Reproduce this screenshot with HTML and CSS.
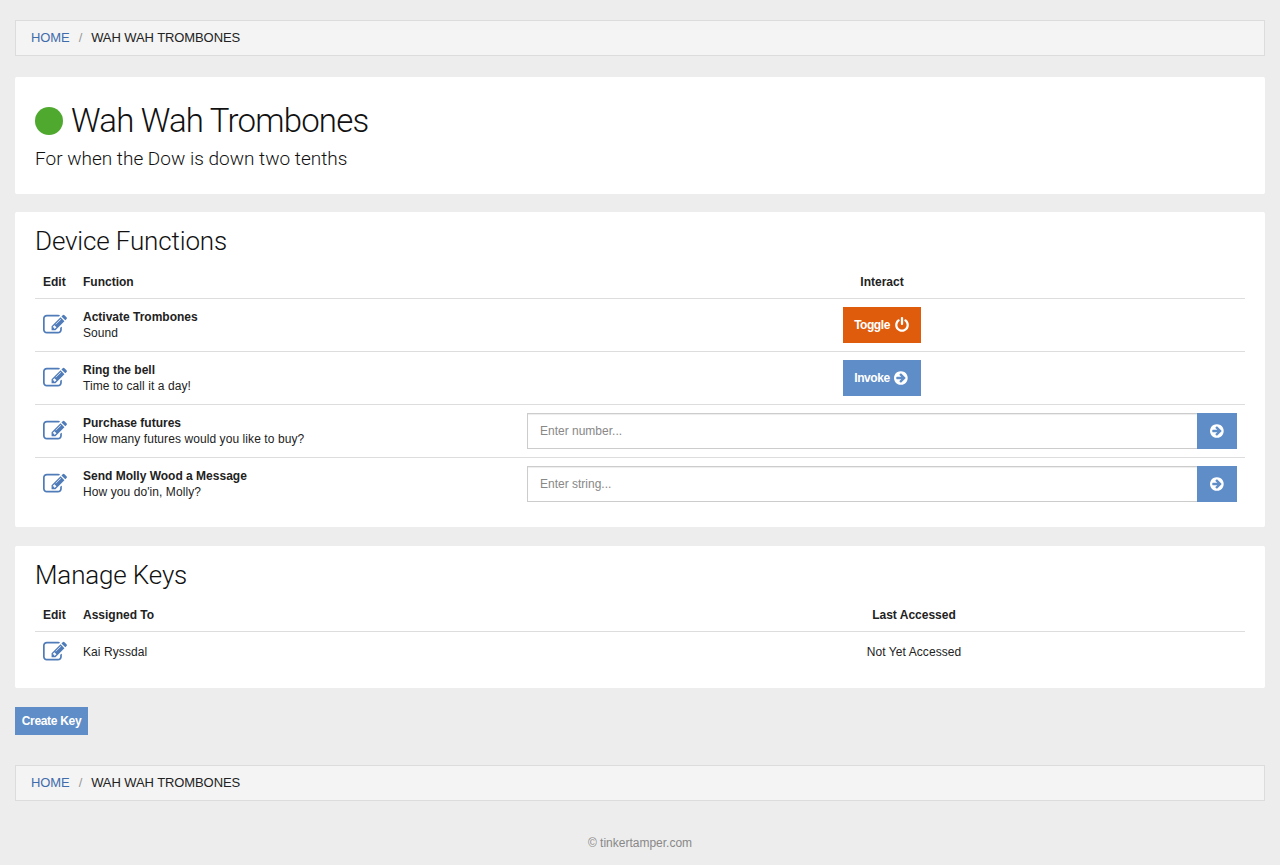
FILE: index.html
```html
<!DOCTYPE html>
<html lang="en">
<head>
  <meta charset="UTF-8" />
  <title>Wah Wah Trombones</title>
  <link rel="stylesheet" href="styles.css">
</head>
<body>
  <svg class="defs" width="0" height="0">
    <symbol id="icon-edit" viewBox="0 0 1792 1792">
      <path d="M888 1184l116-116-152-152-116 116v56h96v96h56zm440-720q-16-16-33 1l-350 350q-17 17-1 33t33-1l350-350q17-17 1-33zm80 594v190q0 119-84.500 203.500t-203.500 84.500h-832q-119 0-203.500-84.500t-84.500-203.500v-832q0-119 84.500-203.500t203.500-84.500h832q63 0 117 25 15 7 18 23 3 17-9 29l-49 49q-14 14-32 8-23-6-45-6h-832q-66 0-113 47t-47 113v832q0 66 47 113t113 47h832q66 0 113-47t47-113v-126q0-13 9-22l64-64q15-15 35-7t20 29zm-96-738l288 288-672 672h-288v-288zm444 132l-92 92-288-288 92-92q28-28 68-28t68 28l152 152q28 28 28 68t-28 68z" fill="currentColor"/>
    </symbol>
    <symbol id="icon-arrow" viewBox="0 0 1792 1792">
      <path d="M1285 896q0-27-18-45l-91-91-362-362q-18-18-45-18t-45 18l-91 91q-18 18-18 45t18 45l189 189h-502q-26 0-45 19t-19 45v128q0 26 19 45t45 19h502l-189 189q-19 19-19 45t19 45l91 91q18 18 45 18t45-18l362-362 91-91q18-18 18-45zm251 0q0 209-103 385.500t-279.500 279.500-385.500 103-385.500-103-279.500-279.500-103-385.500 103-385.500 279.500-279.500 385.500-103 385.500 103 279.500 279.500 103 385.500z" fill="currentColor"/>
    </symbol>
    <symbol id="icon-power" viewBox="0 0 1792 1792">
      <path d="M1664 896q0 156-61 298t-164 245-245 164-298 61-298-61-245-164-164-245-61-298q0-182 80.500-343t226.500-270q43-32 95.500-25t83.500 50q32 42 24.500 94.500t-49.500 84.500q-98 74-151.500 181t-53.500 228q0 104 40.500 198.500t109.500 163.500 163.500 109.500 198.500 40.500 198.500-40.500 163.500-109.500 109.500-163.500 40.500-198.500q0-121-53.500-228t-151.500-181q-42-32-49.500-84.500t24.500-94.500q31-43 84-50t95 25q146 109 226.500 270t80.500 343zm-640-768v640q0 52-38 90t-90 38-90-38-38-90v-640q0-52 38-90t90-38 90 38 38 90z" fill="currentColor"/>
    </symbol>
  </svg>

  <div class="breadcrumb first">
    <a href="#">HOME</a><span class="sep">/</span><span>WAH WAH TROMBONES</span>
  </div>

  <div class="panel device">
    <h1><span class="status"></span>Wah Wah Trombones</h1>
    <p class="lead">For when the Dow is down two tenths</p>
  </div>

  <div class="panel functions">
    <h2>Device Functions</h2>
    <table class="functions-table">
      <colgroup><col class="col-edit"><col class="col-name"><col></colgroup>
      <thead>
        <tr><th>Edit</th><th>Function</th><th class="center">Interact</th></tr>
      </thead>
      <tbody>
        <tr>
          <td><a class="edit" href="#"><svg><use href="#icon-edit"/></svg></a></td>
          <td><strong>Activate Trombones</strong><br>Sound</td>
          <td class="center"><button class="btn btn-action btn-orange">Toggle <svg class="btn-icon"><use href="#icon-power"/></svg></button></td>
        </tr>
        <tr>
          <td><a class="edit" href="#"><svg><use href="#icon-edit"/></svg></a></td>
          <td><strong>Ring the bell</strong><br>Time to call it a day!</td>
          <td class="center"><button class="btn btn-action">Invoke <svg class="btn-icon"><use href="#icon-arrow"/></svg></button></td>
        </tr>
        <tr>
          <td><a class="edit" href="#"><svg><use href="#icon-edit"/></svg></a></td>
          <td><strong>Purchase futures</strong><br>How many futures would you like to buy?</td>
          <td>
            <div class="input-group">
              <input type="text" placeholder="Enter number...">
              <button class="btn btn-go"><svg class="btn-icon"><use href="#icon-arrow"/></svg></button>
            </div>
          </td>
        </tr>
        <tr>
          <td><a class="edit" href="#"><svg><use href="#icon-edit"/></svg></a></td>
          <td><strong>Send Molly Wood a Message</strong><br>How you do'in, Molly?</td>
          <td>
            <div class="input-group">
              <input type="text" placeholder="Enter string...">
              <button class="btn btn-go"><svg class="btn-icon"><use href="#icon-arrow"/></svg></button>
            </div>
          </td>
        </tr>
      </tbody>
    </table>
  </div>

  <div class="panel keys">
    <h2>Manage Keys</h2>
    <table class="keys-table">
      <colgroup><col class="col-edit"><col class="col-owner"><col></colgroup>
      <thead>
        <tr><th>Edit</th><th>Assigned To</th><th class="center">Last Accessed</th></tr>
      </thead>
      <tbody>
        <tr>
          <td><a class="edit" href="#"><svg><use href="#icon-edit"/></svg></a></td>
          <td>Kai Ryssdal</td>
          <td class="center">Not Yet Accessed</td>
        </tr>
      </tbody>
    </table>
  </div>

  <button class="btn btn-create">Create Key</button>

  <div class="breadcrumb">
    <a href="#">HOME</a><span class="sep">/</span><span>WAH WAH TROMBONES</span>
  </div>

  <footer>© tinkertamper.com</footer>
</body>
</html>
```

FILE: styles.css
```css
* {
  box-sizing: border-box;
}
body {
  font-family: "Liberation Sans", Arial, sans-serif;
  font-size: 12px;
  line-height: 16px;
  color: #222;
  background: #ededed;
  margin: 0;
  padding: 20px 15px 0;
}
.defs {
  position: absolute;
}
a {
  color: #3f6cab;
  text-decoration: none;
}

.breadcrumb {
  height: 36px;
  padding: 0 15px 1px;
  display: flex;
  align-items: center;
  font-size: 13px;
  letter-spacing: -0.09px;
  background: #f4f4f4;
  border: 1px solid #dcdcdc;
}
.breadcrumb.first {
  margin-bottom: 21px;
}
.sep {
  color: #999;
  margin: 0 9px;
}

.panel {
  background: #fff;
  padding: 20px;
  border-radius: 2px;
}
.device {
  height: 117px;
  margin-bottom: 18px;
  padding-top: 24px;
}
.functions {
  height: 315px;
  margin-bottom: 19px;
  padding-top: 14px;
}
.keys {
  height: 142px;
  margin-bottom: 19px;
  padding-top: 14px;
}

h1, h2, .lead {
  font-family: Roboto, "Liberation Sans", sans-serif;
  font-weight: 300;
  color: #111;
}
h1 {
  display: flex;
  align-items: center;
  font-size: 33px;
  line-height: 40px;
  letter-spacing: -0.8px;
  margin: 0;
}
.status {
  width: 28px;
  height: 28px;
  border-radius: 50%;
  background: #4fa92f;
  margin-right: 8px;
}
.lead {
  font-size: 19px;
  line-height: 24px;
  margin: 6px 0 0;
}
h2 {
  font-size: 26px;
  line-height: 30px;
  letter-spacing: -0.15px;
  margin: 0 0 8px;
}

table {
  width: 100%;
  border-collapse: collapse;
  table-layout: fixed;
}
.col-edit {
  width: 40px;
}
.col-name {
  width: 444px;
}
.col-owner {
  width: 508px;
}
th {
  height: 34px;
  padding: 2px 8px 0;
  text-align: left;
  vertical-align: middle;
  border-bottom: 1px solid #ddd;
}
.keys-table th {
  height: 33px;
  padding-top: 1px;
}
td {
  height: 53px;
  padding: 8px;
  vertical-align: middle;
  letter-spacing: 0.08px;
  border-top: 1px solid #ddd;
}
td strong {
  letter-spacing: 0;
}
thead + tbody tr:first-child td {
  border-top: 0;
}
.center {
  text-align: center;
}
.keys-table td {
  height: 41px;
}
.edit {
  display: block;
  height: 20px;
}
.edit svg {
  display: block;
  width: 24px;
  height: 24px;
  margin-top: -3px;
  color: #4f7cb9;
}

.btn {
  font-family: inherit;
  font-size: 12px;
  font-weight: bold;
  color: #fff;
  background: #5f8dc8;
  border: 0;
  padding: 0;
  height: 36px;
  width: 78px;
  display: inline-flex;
  align-items: center;
  justify-content: center;
  gap: 4px;
  letter-spacing: -0.3px;
}
.btn-action {
  letter-spacing: -0.45px;
}
.btn-orange {
  background: #df5c0d;
}
.btn-icon {
  width: 16px;
  height: 16px;
}
.btn-go {
  width: 40px;
  flex: none;
  padding-left: 2px;
}
.btn-create {
  display: flex;
  width: 73px;
  height: 28px;
  margin-bottom: 30px;
}
.input-group {
  display: flex;
}
input {
  flex: 1;
  min-width: 0;
  height: 36px;
  padding: 0 12px;
  font-family: inherit;
  font-size: 12px;
  border: 1px solid #ccc;
  border-right: 0;
  box-shadow: inset 0 1px 1px rgba(0,0,0,0.075);
  border-radius: 0;
}
input::placeholder {
  color: #888;
}

footer {
  margin-top: 34px;
  text-align: center;
  color: #888;
  line-height: 16px;
}
```
